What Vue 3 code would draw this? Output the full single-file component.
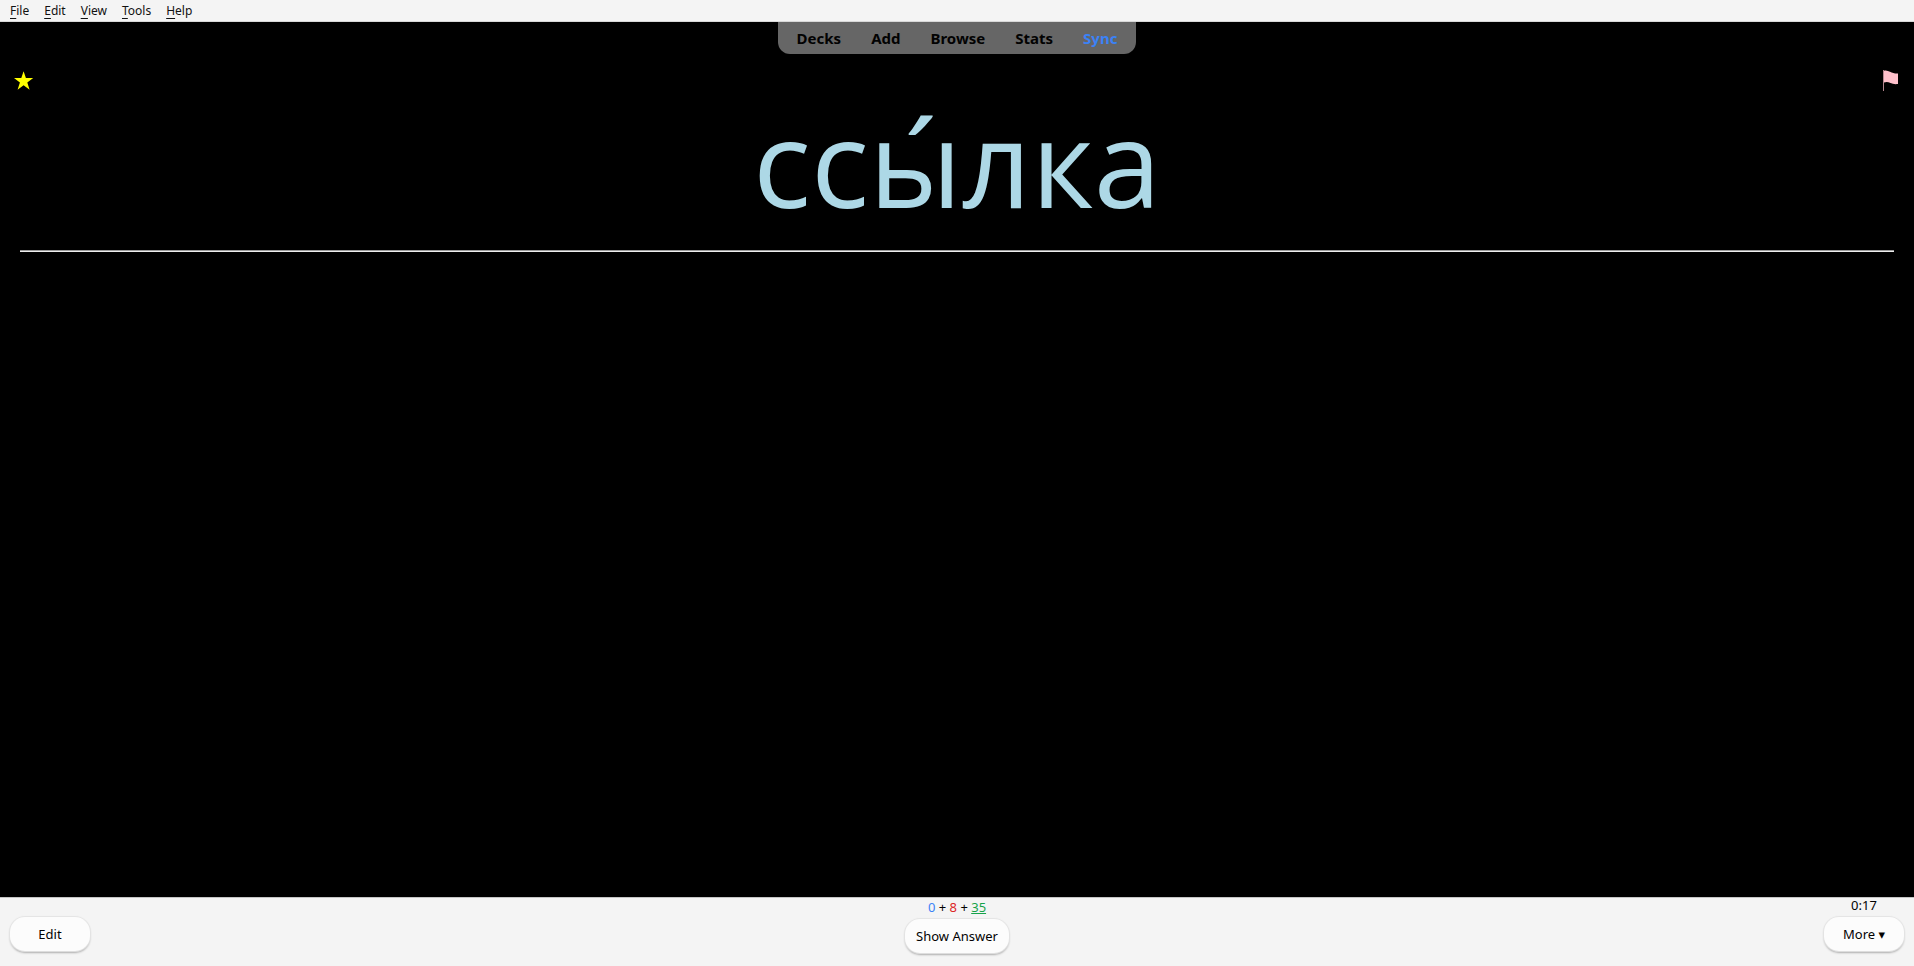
<script setup>
const menus = ['File', 'Edit', 'View', 'Tools', 'Help']
const links = ['Decks', 'Add', 'Browse', 'Stats', 'Sync']
</script>

<template>
  <div class="window">
    <nav class="menubar" aria-label="Menu">
      <button v-for="m in menus" :key="m" type="button" class="menu"><span class="key">{{ m[0] }}</span>{{ m.slice(1) }}</button>
    </nav>

    <main class="review">
      <nav class="toolbar" aria-label="Main">
        <a v-for="l in links" :key="l" href="#" class="link" :class="{ sync: l === 'Sync' }">{{ l }}</a>
      </nav>
      <div class="marks">
        <svg class="mark" width="20" height="22" viewBox="0 0 20 22" role="img" aria-label="Marked">
          <path fill="#ffff00" d="M9.6 1.2 L11.9 8.1 H19.2 L13.3 12.5 L15.6 19.7 L9.6 15.3 L3.6 19.7 L5.9 12.5 L0 8.1 H7.3 Z" />
        </svg>
        <svg class="mark" width="16" height="22" viewBox="0 0 16 22" role="img" aria-label="Flagged">
          <path fill="#ffc0cb" d="M0.3 0 H1 V0.7 C3 0 5 0.6 7 1.8 C9.500 3.300 12 3.600 15 3.500 V14 C12 14.400 9.500 14 7.500 13 C5 11.700 3 11.700 1 12.500 V21 H0.300 Z" />
        </svg>
      </div>
      <div class="card">ссы́лка</div>
      <hr class="rule">
    </main>

    <footer class="bottom">
      <div class="side">
        <button type="button" class="btn">Edit</button>
      </div>
      <div class="middle">
        <div class="counts"><span class="new">0</span> + <span class="learn">8</span> + <span class="due">35</span></div>
        <button type="button" class="btn answer">Show Answer</button>
      </div>
      <div class="side end">
        <div class="timer">0:17</div>
        <button type="button" class="btn">More ▾</button>
      </div>
    </footer>
  </div>
</template>

<style>
body {
  margin: 0;
  background: #000;
}
</style>

<style scoped>
.window {
  display: flex;
  flex-direction: column;
  min-height: 100vh;
  font-family: "Noto Sans", "DejaVu Sans", sans-serif;
  color: #020202;
}
.menubar {
  display: flex;
  gap: 1px;
  box-sizing: border-box;
  height: 22px;
  padding: 0 3px;
  background: #f4f4f4;
  border-bottom: 1px solid #d8d8d8;
}
.menu {
  padding: 0 7px;
  border: 0;
  background: none;
  font: 12px/20px "Noto Sans", sans-serif;
  color: #111;
}
.key {
  text-decoration: underline;
  text-underline-offset: 3px;
}
.review {
  display: flex;
  flex-direction: column;
  flex: 1;
  background: #000;
}
.toolbar {
  display: flex;
  align-self: center;
  padding: 0 4px;
  background: #666;
  border-radius: 0 0 12px 12px;
}
.link {
  padding: 0 15px;
  font-size: 15px;
  font-weight: 700;
  line-height: 32px;
  color: #020202;
  text-decoration: none;
}
.sync {
  color: #3b82f6;
}
.marks {
  display: flex;
  justify-content: space-between;
  padding: 16px 15px 0 14px;
}
.mark {
  display: block;
}
.card {
  padding-bottom: 20px;
  font-family: "Open Sans", "Noto Sans", sans-serif;
  font-size: 121px;
  line-height: 138px;
  text-align: center;
  color: #add8e6;
}
.rule {
  box-sizing: border-box;
  height: 2px;
  margin: 0 20px;
  border: 0;
  border-top: 1px solid #9a9a9a;
  background: #eee;
}
.bottom {
  display: grid;
  grid-template-columns: 1fr auto 1fr;
  box-sizing: border-box;
  min-height: 69px;
  padding: 0 10px;
  background: #f4f4f4;
  border-top: 1px solid #c4c4c4;
  font-size: 13px;
}
.side {
  display: flex;
  flex-direction: column;
  align-items: flex-start;
  justify-content: flex-end;
  padding-bottom: 15px;
}
.end {
  align-items: flex-end;
}
.middle {
  display: flex;
  flex-direction: column;
  align-items: center;
  justify-content: flex-end;
  padding-bottom: 13px;
}
.timer {
  width: 80px;
  line-height: 14px;
  margin-bottom: 5px;
  text-align: center;
}
.counts {
  line-height: 14px;
  margin-bottom: 5px;
}
.new {
  color: #3b82f6;
}
.learn {
  color: #dc2626;
}
.due {
  color: #16a34a;
  text-decoration: underline;
}
.btn {
  box-sizing: border-box;
  width: 80px;
  height: 34px;
  padding: 0;
  border: 0;
  border-radius: 15px;
  background: #fcfcfc;
  box-shadow: 0 0 1px 1px #e4e4e4, 0 2px 2px #aaa;
  font: 13px "Noto Sans", "DejaVu Sans", sans-serif;
  color: #020202;
}
.answer {
  width: 104px;
}
</style>
